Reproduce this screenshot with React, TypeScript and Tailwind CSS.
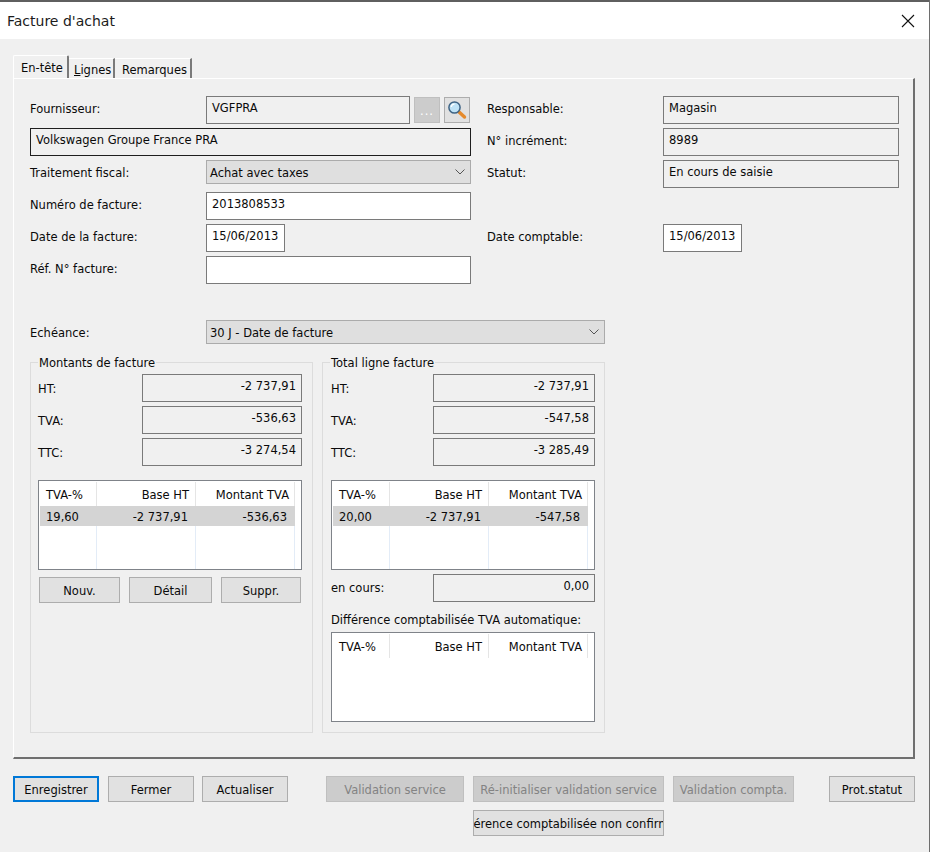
import React from "react";

const cx = (...a: (string | false | undefined)[]) => a.filter(Boolean).join(" ");

function Box({ w, children, kind = "ro", right = false }: { w: string; children?: React.ReactNode; kind?: "ro" | "white" | "dark"; right?: boolean }) {
  return (
    <div
      className={cx(
        "h-[28px] shrink-0 border flex items-start pt-[3px] whitespace-nowrap",
        w,
        right ? "justify-end pr-[5px]" : "pl-[5px]",
        kind === "ro" && "border-[#7a7a7a] bg-[#f0f0f0]",
        kind === "white" && "border-[#7a7a7a] bg-white",
        kind === "dark" && "border-[#1e1e1e] bg-[#f0f0f0]"
      )}
    >
      {children}
    </div>
  );
}

function Chevron() {
  return (
    <svg width="10" height="6" viewBox="0 0 10 6" className="shrink-0">
      <path d="M0.5 0.5 L5 5 L9.5 0.5" fill="none" stroke="#555" strokeWidth="1" />
    </svg>
  );
}

function Select({ w, children }: { w: string; children: React.ReactNode }) {
  return (
    <div className={cx("h-[24px] shrink-0 border border-[#ababab] bg-[#dfdfdf] flex items-center justify-between pl-[3px] pr-[5px]", w)}>
      <span className="mt-[2px]">{children}</span>
      <Chevron />
    </div>
  );
}

function Row({ label, children, className }: { label?: string; children?: React.ReactNode; className?: string }) {
  return (
    <div className={cx("flex items-start", className)}>
      <div className="shrink-0 pt-[5px] w-[176px]">{label}</div>
      {children}
    </div>
  );
}

function Grid({ rows }: { rows: string[][] }) {
  const col = "border-r border-[#e3ecf7]";
  return (
    <div className="h-[90px] border border-[#7f8389] bg-white pl-[1px] pt-[1px] flex flex-col">
      <div className="flex h-[24px] w-[255px] items-center">
        <div className="w-[57px] pl-[6px] pt-[2px] border-r border-[#e5e5e5] h-full flex items-center">TVA-%</div>
        <div className="w-[99px] pr-[6px] pt-[2px] text-right border-r border-[#e5e5e5] h-full flex items-center justify-end">Base HT</div>
        <div className="w-[99px] pr-[5px] pt-[2px] text-right border-r border-[#e5e5e5] h-full flex items-center justify-end">Montant TVA</div>
      </div>
      {rows.map((r) => (
        <div key={r[0]} className="flex h-[20px] w-[255px] bg-[#d4d4d4] items-center pt-[2px]">
          <div className="w-[57px] pl-[6px]">{r[0]}</div>
          <div className="w-[99px] pr-[8px] text-right">{r[1]}</div>
          <div className="w-[99px] pr-[8px] text-right">{r[2]}</div>
        </div>
      ))}
      {rows.length > 0 && (
        <div className="flex flex-1 w-[255px]">
          <div className={cx("w-[57px]", col)} />
          <div className={cx("w-[99px]", col)} />
          <div className={cx("w-[99px]", col)} />
        </div>
      )}
    </div>
  );
}

function Btn({ w, children, kind = "normal", className }: { w: string; children: React.ReactNode; kind?: "normal" | "off" | "focus"; className?: string }) {
  return (
    <div
      className={cx(
        "h-[26px] shrink-0 flex items-center justify-center whitespace-nowrap overflow-hidden",
        w,
        kind === "normal" && "border border-[#adadad] bg-[#e1e1e1]",
        kind === "off" && "border border-[#bfbfbf] bg-[#cccccc] text-[#838383]",
        kind === "focus" && "border-2 border-[#0078d7] bg-[#e1e1e1]",
        className
      )}
    >
      <span className="mt-[1px]">{children}</span>
    </div>
  );
}

function Group({ title, w, children, className }: { title: string; w: string; children: React.ReactNode; className?: string }) {
  return (
    <div className={cx("relative h-[371px] border border-[#dcdcdc] pt-[11px]", w, className)}>
      <div className="absolute left-[7px] top-[-7px] bg-[#f0f0f0] px-[1px] leading-[15px]">{title}</div>
      {children}
    </div>
  );
}

function Amount({ label, lw, w, value, pad = "pt-[7px]" }: { label: string; lw: string; w: string; value: string; pad?: string }) {
  return (
    <div className="flex items-start mb-[4px]">
      <div className={cx("shrink-0", pad, lw)}>{label}</div>
      <Box w={w} right>
        {value}
      </Box>
    </div>
  );
}

export default function App() {
  return (
    <div
      className="w-[930px] h-[852px] bg-[#f0f0f0] text-[#0a0a0a] text-[12px] leading-[16px] overflow-hidden border-r border-[#6e6e6e]"
      style={{ fontFamily: '"DejaVu Sans", sans-serif', fontSize: "11.5px" }}
    >
      <div className="h-[39px] bg-white border-t-2 border-[#5f5f5f] flex items-center justify-between pl-[7px] pr-[14px]">
        <span className="text-[14px] text-[#1c1c1c]">Facture d'achat</span>
        <svg width="14" height="14" viewBox="0 0 14 14">
          <path d="M1 1 L13 13 M13 1 L1 13" stroke="#111" strokeWidth="1.1" fill="none" />
        </svg>
      </div>

      <div className="pl-[13px] pr-[14px] pt-[16px]">
        <div className="flex items-end h-[23px]">
          <div className="w-[56px] h-[23px] border-t border-l border-white border-r-2 border-r-[#7a7a7a] pl-[7px] pt-[4px] rounded-t-[2px]">En-tête</div>
          <div className="w-[46px] h-[20px] border-r-2 border-[#7a7a7a] pl-[5px] pt-[3px] border-t border-t-white">
            <u className="underline">L</u>ignes
          </div>
          <div className="w-[77px] h-[20px] border-r-2 border-[#7a7a7a] pl-[7px] pt-[3px] border-t border-t-white">Remarques</div>
        </div>

        <div className="h-[681px] w-[902px] border-t border-l border-white border-r-2 border-b-2 border-r-[#6f6f6f] border-b-[#6f6f6f] pl-[16px] pt-[17px]">
          <div className="flex">
            <div className="w-[457px] shrink-0 flex flex-col gap-[4px]">
              <Row label="Fournisseur:">
                <Box w="w-[204px]">VGFPRA</Box>
                <div className="ml-[4px] mt-[1px] w-[26px] h-[26px] bg-[#cccccc] border border-[#bfbfbf] flex items-end justify-center text-white leading-[21px] tracking-[1px]">...</div>
                <div className="ml-[4px] mt-[1px] w-[26px] h-[26px] bg-[#e1e1e1] border border-[#adadad] flex items-center justify-center">
                  <svg width="20" height="20" viewBox="0 0 20 20">
                    <path d="M11.5 11.5 L17.5 17" stroke="#e58a2c" strokeWidth="3.4" strokeLinecap="round" />
                    <circle cx="7.5" cy="7.5" r="5.6" fill="#bfe3f7" stroke="#3f6485" strokeWidth="1.5" />
                    <path d="M4.2 7 A3.4 3.4 0 0 1 7.5 4.2" stroke="#fff" strokeWidth="1.3" fill="none" />
                  </svg>
                </div>
              </Row>
              <Box w="w-[441px]" kind="dark">Volkswagen Groupe France PRA</Box>
              <Row label="Traitement fiscal:">
                <Select w="w-[265px]">Achat avec taxes</Select>
              </Row>
              <Row label="Numéro de facture:" className="mt-[4px]">
                <Box w="w-[265px]" kind="white">2013808533</Box>
              </Row>
              <Row label="Date de la facture:">
                <Box w="w-[79px]" kind="white">15/06/2013</Box>
              </Row>
              <Row label="Réf. N° facture:">
                <Box w="w-[265px]" kind="white" />
              </Row>
            </div>
            <div className="flex flex-col gap-[4px]">
              <Row label="Responsable:">
                <Box w="w-[236px]">Magasin</Box>
              </Row>
              <Row label="N° incrément:">
                <Box w="w-[236px]">8989</Box>
              </Row>
              <Row label="Statut:">
                <Box w="w-[236px]">En cours de saisie</Box>
              </Row>
              <Row label="Date comptable:" className="mt-[32px]">
                <Box w="w-[79px]" kind="white">15/06/2013</Box>
              </Row>
            </div>
          </div>

          <Row label="Echéance:" className="mt-[36px]">
            <Select w="w-[399px]">30 J - Date de facture</Select>
          </Row>

          <div className="flex gap-[9px] mt-[18px]">
            <Group title="Montants de facture" w="w-[283px]">
              <div className="pl-[7px]">
                <Amount label="HT:" lw="w-[104px]" w="w-[160px]" value="-2 737,91" />
                <Amount label="TVA:" lw="w-[104px]" w="w-[160px]" value="-536,63" />
                <Amount label="TTC:" lw="w-[104px]" w="w-[160px]" value="-3 274,54" />
                <div className="w-[264px] mt-[14px]">
                  <Grid rows={[["19,60", "-2 737,91", "-536,63"]]} />
                </div>
                <div className="flex mt-[7px] pl-[1px] gap-[9px]">
                  <Btn w="w-[81px]">Nouv.</Btn>
                  <Btn w="w-[83px]">Détail</Btn>
                  <Btn w="w-[80px]">Suppr.</Btn>
                </div>
              </div>
            </Group>
            <Group title="Total ligne facture" w="w-[283px]">
              <div className="pl-[8px]">
                <Amount label="HT:" lw="w-[102px]" w="w-[162px]" value="-2 737,91" />
                <Amount label="TVA:" lw="w-[102px]" w="w-[162px]" value="-547,58" />
                <Amount label="TTC:" lw="w-[102px]" w="w-[162px]" value="-3 285,49" />
                <div className="w-[264px] mt-[14px]">
                  <Grid rows={[["20,00", "-2 737,91", "-547,58"]]} />
                </div>
                <div className="mt-[4px]">
                  <Amount label="en cours:" lw="w-[102px]" w="w-[162px]" value="0,00" pad="pt-[6px]" />
                </div>
                <div className="mt-[10px] mb-[4px]">Différence comptabilisée TVA automatique:</div>
                <div className="w-[264px]">
                  <Grid rows={[]} />
                </div>
              </div>
            </Group>
          </div>
        </div>

        <div className="flex mt-[17px]">
          <Btn w="w-[86px]" kind="focus">Enregistrer</Btn>
          <Btn w="w-[86px]" className="ml-[9px]">Fermer</Btn>
          <Btn w="w-[86px]" className="ml-[8px]">Actualiser</Btn>
          <Btn w="w-[138px]" kind="off" className="ml-[38px]">Validation service</Btn>
          <div className="ml-[9px] flex flex-col gap-[8px] shrink-0">
            <Btn w="w-[191px]" kind="off">Ré-initialiser validation service</Btn>
            <Btn w="w-[191px]">Différence comptabilisée non confirmée</Btn>
          </div>
          <Btn w="w-[121px]" kind="off" className="ml-[9px]">Validation compta.</Btn>
          <Btn w="w-[86px]" className="ml-[35px]">Prot.statut</Btn>
        </div>
      </div>
    </div>
  );
}
